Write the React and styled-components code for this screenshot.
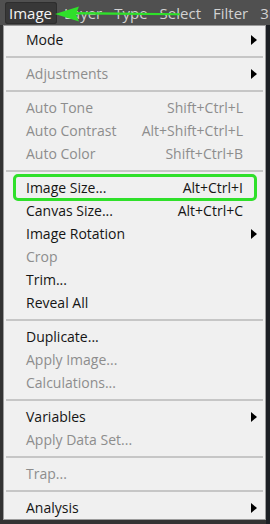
import React from 'react';
import styled, { createGlobalStyle } from 'styled-components';

const GlobalStyle = createGlobalStyle`
  html, body {
    margin: 0;
    padding: 0;
    background: #2b2b2b;
  }
  body {
    font-family: "Open Sans", "Noto Sans", sans-serif;
  }
`;

const Page = styled.div`
  position: relative;
  width: 270px;
  height: 524px;
  overflow: hidden;
  background: linear-gradient(90deg, #333 0, #333 266px, #1c1f24 266px);
`;

const MenuBar = styled.div`
  display: flex;
  align-items: center;
  gap: 3px;
  height: 25px;
  padding: 0 0 0 5px;
  background: #505050;
  overflow: hidden;
`;

const MenuTitle = styled.div`
  display: flex;
  align-items: center;
  height: 22px;
  padding: 0 5px 0 4px;
  border-radius: 3px;
  font-size: 15px;
  white-space: nowrap;
  color: ${p => (p.active ? '#f4f4f4' : '#d2d2d2')};
  background: ${p => (p.active ? '#383838' : 'transparent')};
  box-shadow: ${p => (p.active ? 'inset 0 0 0 1px #2e2e2e' : 'none')};
`;

const Dropdown = styled.div`
  width: 261px;
  margin-left: 3px;
  padding: 2px 0 0;
  background: #f0f0f0;
  border: 1px solid #9c9c9c;
`;

const Row = styled.div`
  position: relative;
  display: grid;
  grid-template-columns: 1fr auto 22px;
  align-items: center;
  height: 23px;
  padding-left: 22px;
  font-size: 14px;
  color: ${p => (p.disabled ? '#8d8d8d' : '#151515')};
`;

const Label = styled.span`
  white-space: nowrap;
`;

const Shortcut = styled.span`
  white-space: nowrap;
  text-align: right;
`;

const ArrowCell = styled.span`
  display: flex;
  align-items: center;
  padding-left: 8px;
`;

const SubArrow = styled.span`
  width: 0;
  height: 0;
  border-top: 5px solid transparent;
  border-bottom: 5px solid transparent;
  border-left: 6px solid ${p => (p.disabled ? '#8d8d8d' : '#000')};
`;

const Separator = styled.div`
  display: flex;
  align-items: center;
  height: 11px;
  padding: 0 2px;

  &::after {
    content: '';
    flex: 1;
    height: 2px;
    background: #c6c6c6;
  }
`;

const Highlight = styled.span`
  position: absolute;
  top: -2px;
  bottom: -2px;
  left: 9px;
  right: 8px;
  border: 3px solid #2fe02a;
  border-radius: 5px;
  pointer-events: none;
`;

const PointerArrow = styled.svg`
  position: absolute;
  left: 52px;
  top: 5px;
`;

const titles = ['Image', 'Layer', 'Type', 'Select', 'Filter', '3D'];

const items = [
  { label: 'Mode', sub: true },
  'sep',
  { label: 'Adjustments', sub: true, disabled: true },
  'sep',
  { label: 'Auto Tone', key: 'Shift+Ctrl+L', disabled: true },
  { label: 'Auto Contrast', key: 'Alt+Shift+Ctrl+L', disabled: true },
  { label: 'Auto Color', key: 'Shift+Ctrl+B', disabled: true },
  'sep',
  { label: 'Image Size...', key: 'Alt+Ctrl+I', marked: true },
  { label: 'Canvas Size...', key: 'Alt+Ctrl+C' },
  { label: 'Image Rotation', sub: true },
  { label: 'Crop', disabled: true },
  { label: 'Trim...' },
  { label: 'Reveal All' },
  'sep',
  { label: 'Duplicate...' },
  { label: 'Apply Image...', disabled: true },
  { label: 'Calculations...', disabled: true },
  'sep',
  { label: 'Variables', sub: true },
  { label: 'Apply Data Set...', disabled: true },
  'sep',
  { label: 'Trap...', disabled: true },
  'sep',
  { label: 'Analysis', sub: true },
];

export default function App() {
  return (
    <Page>
      <GlobalStyle />
      <MenuBar>
        {titles.map((t, i) => (
          <MenuTitle key={t} active={i === 0}>{t}</MenuTitle>
        ))}
      </MenuBar>
      <Dropdown>
        {items.map((it, i) =>
          it === 'sep' ? (
            <Separator key={i} />
          ) : (
            <Row key={i} disabled={it.disabled}>
              <Label>{it.label}</Label>
              <Shortcut>{it.key}</Shortcut>
              <ArrowCell>{it.sub && <SubArrow />}</ArrowCell>
              {it.marked && <Highlight />}
            </Row>
          )
        )}
      </Dropdown>
      <PointerArrow width="130" height="18" viewBox="0 0 130 18">
        <path d="M128 8.2 L24 7 L24 9.5 L128 10.2 Z" fill="#2fe02a" />
        <path d="M3 9 L27 1.5 L24 9 L27 16.5 Z" fill="#2fe02a" />
      </PointerArrow>
    </Page>
  );
}
